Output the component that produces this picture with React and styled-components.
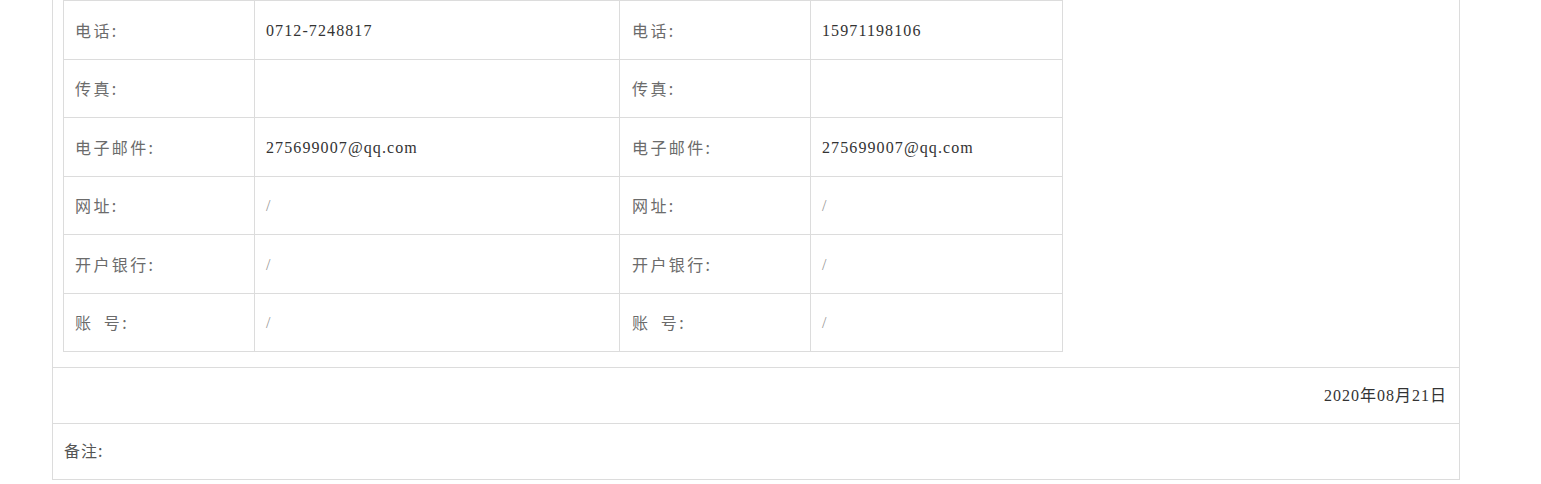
import React from "react";
import styled, { createGlobalStyle } from "styled-components";

const Global = createGlobalStyle`
  html, body { margin: 0; padding: 0; background: #fff; }
  body { font-family: "Liberation Serif", "Noto Sans CJK SC", serif; }
`;

const Panel = styled.div`
  margin-left: 52px;
  width: 1408px;
  box-sizing: border-box;
  border: 1px solid #dcdcdc;
  border-top: none;
`;

const TableWrap = styled.div`
  padding: 0 0 15px 10px;
`;

const Grid = styled.div`
  display: grid;
  width: 1000px;
  box-sizing: border-box;
  grid-template-columns: 191px 365px 191px 252px;
  grid-template-rows: repeat(3, 59px 58px);
  border-top: 1px solid #dcdcdc;
  border-left: 1px solid #dcdcdc;
`;

const Cell = styled.div`
  display: flex;
  align-items: center;
  box-sizing: border-box;
  border-right: 1px solid #dcdcdc;
  border-bottom: 1px solid #dcdcdc;
  padding-left: ${(p) => (p.$pad ? p.$pad : 11)}px;
  padding-bottom: 1px;
  font-size: 16px;
  white-space: pre;
`;

const Label = styled.span`
  font-family: "Noto Sans CJK SC", sans-serif;
  color: #6b6b6b;
  letter-spacing: 2.4px;
  font-size: 16px;
`;

const Value = styled.span`
  font-family: "Liberation Serif", "Noto Sans CJK SC", serif;
  color: ${(p) => (p.$muted ? "#999" : "#333")};
  letter-spacing: 1.1px;
  font-size: 16px;
  padding-top: 2px;
`;

const Row = styled.div`
  display: flex;
  align-items: center;
  justify-content: ${(p) => (p.$right ? "flex-end" : "flex-start")};
  height: 56px;
  box-sizing: border-box;
  border-top: 1px solid #dcdcdc;
  padding: 0 12px 3px 11px;
  font-size: 16px;
`;

const DateText = styled.span`
  font-family: "Liberation Serif", "Noto Sans CJK SC", serif;
  color: #333;
  letter-spacing: 1px;
`;

const Note = styled.span`
  font-family: "Noto Sans CJK SC", sans-serif;
  color: #555;
  letter-spacing: 1px;
`;

const rows = [
  ["电话:", "0712-7248817", "电话:", "15971198106"],
  ["传真:", "", "传真:", ""],
  ["电子邮件:", "275699007@qq.com", "电子邮件:", "275699007@qq.com"],
  ["网址:", "/", "网址:", "/"],
  ["开户银行:", "/", "开户银行:", "/"],
  ["账\u2002号:", "/", "账\u2002号:", "/"],
];

export default function App() {
  return (
    <>
      <Global />
      <Panel>
        <TableWrap>
          <Grid>
            {rows.map((r, i) => (
              <React.Fragment key={i}>
                <Cell>
                  <Label>{r[0]}</Label>
                </Cell>
                <Cell>
                  <Value $muted={r[1] === "/"}>{r[1]}</Value>
                </Cell>
                <Cell $pad={12}>
                  <Label>{r[2]}</Label>
                </Cell>
                <Cell>
                  <Value $muted={r[3] === "/"}>{r[3]}</Value>
                </Cell>
              </React.Fragment>
            ))}
          </Grid>
        </TableWrap>
        <Row $right>
          <DateText>2020年08月21日</DateText>
        </Row>
        <Row>
          <Note>备注:</Note>
        </Row>
      </Panel>
    </>
  );
}
